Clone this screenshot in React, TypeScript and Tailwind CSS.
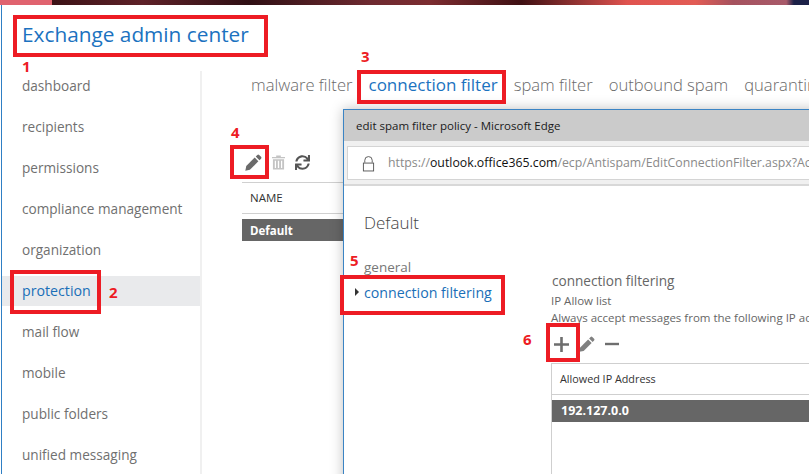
import { FaSync } from "react-icons/fa";

const navItems = [
  "dashboard",
  "recipients",
  "permissions",
  "compliance management",
  "organization",
  "protection",
  "mail flow",
  "mobile",
  "public folders",
  "unified messaging",
];

const tabs = ["malware filter", "connection filter", "spam filter", "outbound spam", "quarantine"];

const Pencil = ({ className }: { className: string }) => (
  <svg viewBox="0 0 16 16" className={className} fill="currentColor">
    <path d="M11.6 0.9 a1.2 1.2 0 0 1 1.7 0 l1.8 1.8 a1.2 1.2 0 0 1 0 1.7 l-1.5 1.5 -3.5 -3.5 z" />
    <path d="M9.1 3.4 l3.5 3.5 -8 8 -4.3 0.9 0.9 -4.4 z" />
  </svg>
);

const Trash = () => (
  <svg viewBox="0 0 14 15" className="w-[13px] h-[15px] text-[#c4c4c4]" fill="currentColor">
    <path d="M4.5 0h5v1.5H14V3H0V1.5h4.5z" />
    <path d="M1 4h12v11H1z M3 5.5v8h1.3v-8z M6.3 5.5v8h1.4v-8z M9.7 5.5v8H11v-8z" fillRule="evenodd" />
  </svg>
);

const Mark = ({ n, className }: { n: string; className: string }) => (
  <span className={`absolute text-[15px] leading-[15px] font-bold text-[#ed1c24] ${className}`}>{n}</span>
);

const Box = ({ className }: { className: string }) => (
  <div className={`absolute border-[4px] border-[#ed1c24] ${className}`} />
);

export default function App() {
  return (
    <div className="relative w-[809px] h-[474px] overflow-hidden bg-white flex flex-col font-['Open_Sans',sans-serif]">
      <div className="h-[5px] shrink-0 flex">
        <div className="w-[52px] bg-[#e0636f]" />
        <div className="flex-1 bg-[linear-gradient(90deg,#3c1216_0%,#5e2128_12%,#2f0f14_26%,#6e2a30_42%,#7c2c30_50%,#3f1013_62%,#e0534f_76%,#e25c55_85%,#a5525e_90%,#a85a6a_97%,#1c2148_98%)]" />
      </div>
      <div className="flex-1 min-h-0 ml-px border-l border-[#2f7fc4] flex flex-col">
        <h1 className="ml-[20px] mt-[14px] h-[52px] text-[20.8px] leading-[30px] text-[#1b72c0]">Exchange admin center</h1>
        <div className="flex flex-1 min-h-0">
          <nav className="w-[198px] shrink-0 flex flex-col">
            {navItems.map((item) => (
              <a
                key={item}
                className={`h-[30px] mb-[11px] shrink-0 pl-[20px] flex items-center whitespace-nowrap ${
                  item === "protection" ? "bg-[#e9eaec] text-[14.2px] text-[#1a6fb8]" : "text-[13.6px] text-[#707070]"
                }`}
              >
                {item}
              </a>
            ))}
          </nav>
          <main className="flex-1 min-w-0 border-l-2 border-[#f0f0f0] pl-[49px]">
            <div className="flex gap-[16px] h-[28px] items-center whitespace-nowrap">
              {tabs.map((t) => (
                <span
                  key={t}
                  className={
                    t === "connection filter"
                      ? "text-[17px] text-[#1b72c0]"
                      : "text-[16.6px] font-light text-[#6a6a6a]"
                  }
                >
                  {t}
                </span>
              ))}
            </div>
            <div className="flex items-center gap-[10px] h-[30px] mt-[48px] -ml-[6px]">
              <Pencil className="w-[17px] h-[17px] text-[#6a6a6a]" />
              <Trash />
              <FaSync className="w-[15px] h-[15px] text-[#555555]" />
            </div>
            <div className="mt-[5px] -ml-[9px]">
              <div className="h-[32px] flex items-center pl-[8px] border-y border-[#d0d0d0] text-[11.5px] text-[#333333]">NAME</div>
              <div className="h-[22px] mt-[5px] pt-px flex items-center pl-[8px] bg-[#666666] text-[11.5px] font-bold text-white">Default</div>
            </div>
          </main>
        </div>
      </div>

      {/* popup window */}
      <div className="absolute left-[343px] top-[109px] w-[600px] h-[400px] bg-white border border-[#3b84c4] shadow-[0_0_12px_rgba(0,0,0,0.25)] flex flex-col">
        <div className="h-[31px] shrink-0 bg-[#cbcbcb] pl-[12px] flex items-center text-[11.5px] text-[#1a1a1a]">
          edit spam filter policy - Microsoft Edge
        </div>
        <div className="h-[45px] shrink-0 bg-[#f0f0f0] border-b-2 border-[#d8d8d8] pl-[3px] pt-[5px]">
          <div className="h-[34px] pt-px bg-white border border-[#d4d4d4] flex items-center text-[12.3px] whitespace-nowrap text-[#8a8a8a]">
            <svg viewBox="0 0 14 17" className="w-[13px] h-[16px] ml-[14px] mr-[13px] shrink-0 text-[#555555]" fill="none" stroke="currentColor">
              <path d="M3 7V4.5a4 4 0 0 1 8 0V7" />
              <rect x="1.5" y="7.5" width="11" height="8.5" />
            </svg>
            https://<span className="text-[#111111]">outlook.office365.com</span>/ecp/Antispam/EditConnectionFilter.aspx?Ac
          </div>
        </div>
        <div className="flex-1 flex min-h-0">
          <div className="w-[207px] shrink-0 pl-[20px]">
            <div className="mt-[25px] text-[17px] font-light leading-[24px] text-[#444444]">Default</div>
            <div className="mt-[20px] h-[25px] flex items-center text-[13.5px] text-[#777777]">general</div>
            <div className="h-[25px] relative flex items-center text-[14.2px] whitespace-nowrap text-[#1a6fb8]">
              <span className="absolute -left-[9px] top-[8px] border-y-[4px] border-y-transparent border-l-[4px] border-l-[#333333]" />
              connection filtering
            </div>
          </div>
          <div className="flex-1 min-w-0 whitespace-nowrap">
            <div className="mt-[85px] ml-px h-[20px] flex items-center text-[13.6px] text-[#666666]">connection filtering</div>
            <div className="mt-[2px] h-[16px] flex items-center text-[11.5px] text-[#666666]">IP Allow list</div>
            <div className="h-[17px] flex items-center text-[11.5px] text-[#666666]">Always accept messages from the following IP addresses</div>
            <div className="h-[28px] mt-[4px] ml-[3px] flex items-center gap-[10px] text-[#6e6e6e]">
              <svg viewBox="0 0 15 15" className="w-[15px] h-[15px]" fill="currentColor">
                <path d="M6.2 0h2.6v6.2H15v2.6H8.8V15H6.2V8.8H0V6.2h6.2z" />
              </svg>
              <Pencil className="w-[16px] h-[16px] text-[#808080]" />
              <svg viewBox="0 0 14 14" className="w-[14px] h-[14px]" fill="currentColor">
                <path d="M0 5.8h14v2.4H0z" />
              </svg>
            </div>
            <div className="mt-[5px] h-[200px] border border-[#cfcfcf]">
              <div className="h-[31px] flex items-center pl-[8px] border-b border-[#cfcfcf] text-[10.8px] text-[#333333]">Allowed IP Address</div>
              <div className="h-[22px] mt-[5px] flex items-center pl-[9px] bg-[#666666] text-[12.5px] font-bold text-white">192.127.0.0</div>
            </div>
          </div>
        </div>
      </div>

      {/* annotations */}
      <Box className="left-[13px] top-[15px] w-[255px] h-[42px]" />
      <Box className="left-[10px] top-[270px] w-[91px] h-[44px]" />
      <Box className="left-[357px] top-[70px] w-[149px] h-[34px]" />
      <Box className="left-[230px] top-[145px] w-[39px] h-[34px]" />
      <Box className="left-[340px] top-[275px] w-[165px] h-[40px]" />
      <Box className="left-[546px] top-[323px] w-[34px] h-[39px]" />
      <Mark n="1" className="left-[22px] top-[59px]" />
      <Mark n="2" className="left-[109px] top-[285px]" />
      <Mark n="3" className="left-[361px] top-[49px]" />
      <Mark n="4" className="left-[231px] top-[125px]" />
      <Mark n="5" className="left-[350px] top-[253px]" />
      <Mark n="6" className="left-[523px] top-[332px]" />
    </div>
  );
}
